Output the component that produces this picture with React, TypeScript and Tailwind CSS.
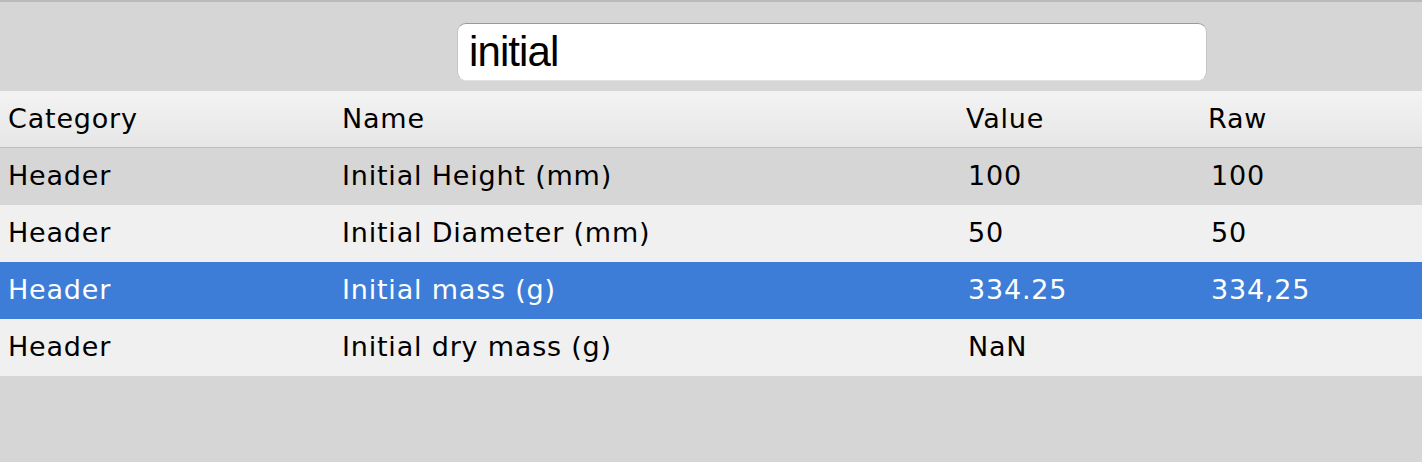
const COLUMNS = ["Category", "Name", "Value", "Raw"];

const ROWS = [
  { category: "Header", name: "Initial Height (mm)", value: "100", raw: "100" },
  { category: "Header", name: "Initial Diameter (mm)", value: "50", raw: "50" },
  { category: "Header", name: "Initial mass (g)", value: "334.25", raw: "334,25", selected: true },
  { category: "Header", name: "Initial dry mass (g)", value: "NaN", raw: "" },
];

const GRID = "grid grid-cols-[334px_624px_242px_1fr]";
const CELL = "pl-2 whitespace-nowrap";

export default function App() {
  return (
    <div
      className="w-[1422px] h-[462px] bg-[#d6d6d6] border-t-2 border-[#bababa] flex flex-col text-black"
      style={{ fontFamily: '"DejaVu Sans", Verdana, sans-serif' }}
    >
      {/* search field */}
      <div className="h-[89px] flex items-start pt-[21px] pl-[457px]">
        <div className="w-[750px] h-[58px] bg-white rounded-[9px] border border-[#c4c4c4] border-t-[#9a9a9a] border-b-[#e2e2e2] flex items-center pl-[11px]">
          <span
            className="text-[42px] leading-none tracking-[-0.9px] text-black"
            style={{ fontFamily: '"Liberation Sans", Arial, sans-serif' }}
          >
            initial
          </span>
        </div>
      </div>

      {/* table header */}
      <div className={`${GRID} h-[57px] items-center bg-gradient-to-b from-[#f3f3f3] to-[#e6e6e6] border-b border-[#bdbdbd] text-[27px] tracking-[0.8px]`}>
        {COLUMNS.map((c) => (
          <div key={c} className={CELL}>{c}</div>
        ))}
      </div>

      {/* rows */}
      {ROWS.map((r, i) => (
        <div
          key={r.name}
          className={`${GRID} h-[57px] items-center text-[27px] tracking-[0.8px] ${
            r.selected ? "bg-[#3d7dd7] text-white" : i % 2 === 0 ? "bg-[#d6d6d6]" : "bg-[#f0f0f0]"
          }`}
        >
          <div className={CELL}>{r.category}</div>
          <div className={CELL}>{r.name}</div>
          <div className={`${CELL} pl-[10px]`}>{r.value}</div>
          <div className={`${CELL} pl-[11px]`}>{r.raw}</div>
        </div>
      ))}
    </div>
  );
}
